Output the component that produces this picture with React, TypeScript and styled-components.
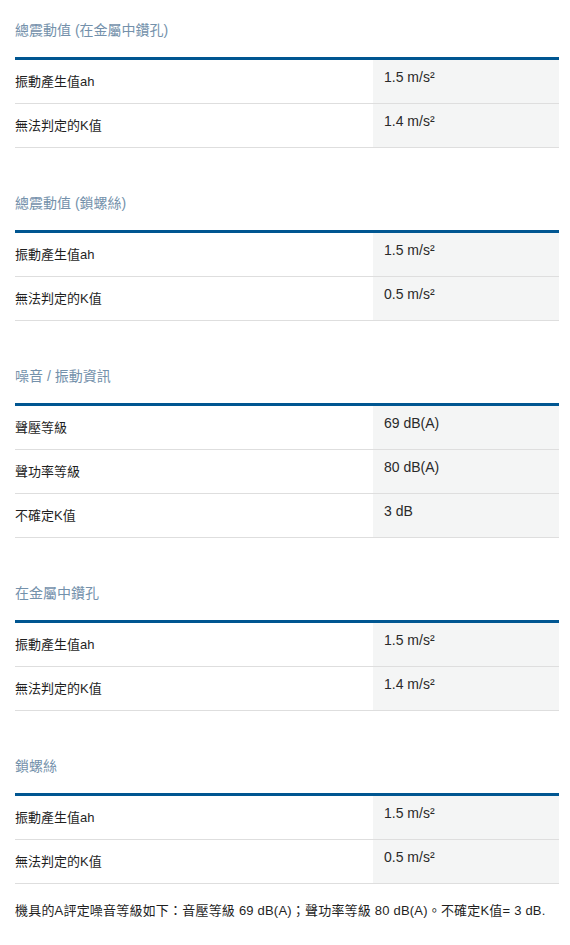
import React from 'react';
import styled, { createGlobalStyle } from 'styled-components';

const GlobalStyle = createGlobalStyle`
    body {
        margin: 0;
        background: #fff;
        font-family: "Liberation Sans", "Noto Sans CJK TC", sans-serif;
        color: #222;
    }
`;

const Page = styled.div`
    padding: 20px 11px 20px 15px;
`;

const Section = styled.section`
    & + & {
        margin-top: 45px;
    }
`;

const Title = styled.h3`
    margin: 0 0 17px;
    font-size: 14px;
    line-height: 20px;
    font-weight: normal;
    color: #7491ab;
`;

const Table = styled.div`
    border-top: 3px solid #005691;
`;

const Row = styled.div`
    display: grid;
    grid-template-columns: 358px 1fr;
    height: 44px;
    border-bottom: 1px solid #dedede;
    box-sizing: border-box;
`;

const Label = styled.div`
    padding-top: 12px;
    font-size: 13px;
    line-height: 20px;
    color: #1f1f1f;
`;

const Value = styled.div`
    background: #f4f5f5;
    padding: 7px 0 0 11px;
    font-size: 14px;
    line-height: 20px;
    color: #2a2a2a;
`;

const Footer = styled.p`
    margin: 17px 0 0;
    font-size: 13px;
    line-height: 20px;
    letter-spacing: 0.2px;
    color: #1f1f1f;
`;

type Item = { label: string; value: string };
type Group = { title: string; rows: Item[] };

const groups: Group[] = [
    {
        title: '總震動值 (在金屬中鑽孔)',
        rows: [
            { label: '振動產生值ah', value: '1.5 m/s²' },
            { label: '無法判定的K值', value: '1.4 m/s²' },
        ],
    },
    {
        title: '總震動值 (鎖螺絲)',
        rows: [
            { label: '振動產生值ah', value: '1.5 m/s²' },
            { label: '無法判定的K值', value: '0.5 m/s²' },
        ],
    },
    {
        title: '噪音 / 振動資訊',
        rows: [
            { label: '聲壓等級', value: '69 dB(A)' },
            { label: '聲功率等級', value: '80 dB(A)' },
            { label: '不確定K值', value: '3 dB' },
        ],
    },
    {
        title: '在金屬中鑽孔',
        rows: [
            { label: '振動產生值ah', value: '1.5 m/s²' },
            { label: '無法判定的K值', value: '1.4 m/s²' },
        ],
    },
    {
        title: '鎖螺絲',
        rows: [
            { label: '振動產生值ah', value: '1.5 m/s²' },
            { label: '無法判定的K值', value: '0.5 m/s²' },
        ],
    },
];

export default function App() {
    return (
        <Page>
            <GlobalStyle />
            {groups.map(g => (
                <Section key={g.title}>
                    <Title>{g.title}</Title>
                    <Table>
                        {g.rows.map(r => (
                            <Row key={r.label}>
                                <Label>{r.label}</Label>
                                <Value>{r.value}</Value>
                            </Row>
                        ))}
                    </Table>
                </Section>
            ))}
            <Footer>
                機具的A評定噪音等級如下：音壓等級 69 dB(A)；聲功率等級 80 dB(A)。不確定K值= 3 dB.
            </Footer>
        </Page>
    );
}
